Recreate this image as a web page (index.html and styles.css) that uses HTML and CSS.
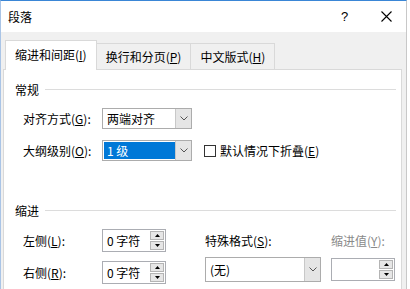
FILE: index.html
```html
<!DOCTYPE html>
<html lang="zh">
<head>
  <meta charset="UTF-8" />
  <title>段落</title>
  <link rel="stylesheet" href="styles.css">
</head>
<body>
  <div class="window">
    <div class="titlebar">
      <span class="title">段落</span>
      <span class="help">?</span>
      <span class="close">
        <svg width="11" height="11" viewBox="0 0 11 11"><path d="M0.5 0.5 L10.5 10.5 M10.5 0.5 L0.5 10.5" stroke="#000" stroke-width="1.1" fill="none"/></svg>
      </span>
    </div>

    <div class="tabs">
      <div class="tab active">缩进和间距(<u>I</u>)</div>
      <div class="tab">换行和分页(<u>P</u>)</div>
      <div class="tab">中文版式(<u>H</u>)</div>
    </div>

    <div class="panel">
      <div class="group-title first"><span>常规</span><div class="line"></div></div>

      <div class="row">
        <label class="lbl">对齐方式(<u>G</u>):</label>
        <div class="select">
          <div class="value">两端对齐</div>
          <div class="arrow"><svg width="8" height="5" viewBox="0 0 8 5"><path d="M0.5 0.5 L4 4 L7.5 0.5" stroke="#555" fill="none"/></svg></div>
        </div>
      </div>

      <div class="row">
        <label class="lbl">大纲级别(<u>O</u>):</label>
        <div class="select">
          <div class="value selected">1 级</div>
          <div class="arrow"><svg width="8" height="5" viewBox="0 0 8 5"><path d="M0.5 0.5 L4 4 L7.5 0.5" stroke="#555" fill="none"/></svg></div>
        </div>
        <div class="check">
          <span class="box"></span>
          <span>默认情况下折叠(<u>E</u>)</span>
        </div>
      </div>

      <div class="group-title second"><span>缩进</span><div class="line"></div></div>

      <div class="indent">
        <div class="indent-left">
          <div class="row tall">
            <label class="lbl">左侧(<u>L</u>):</label>
            <div class="spin">
              <div class="value">0 字符</div>
              <div class="spin-btns">
                <div class="sb"><svg width="5" height="3" viewBox="0 0 5 3"><path d="M0 3 L2.5 0 L5 3 Z" fill="#000"/></svg></div>
                <div class="sb"><svg width="5" height="3" viewBox="0 0 5 3"><path d="M0 0 L2.5 3 L5 0 Z" fill="#000"/></svg></div>
              </div>
            </div>
          </div>
          <div class="row tall">
            <label class="lbl">右侧(<u>R</u>):</label>
            <div class="spin">
              <div class="value">0 字符</div>
              <div class="spin-btns">
                <div class="sb"><svg width="5" height="3" viewBox="0 0 5 3"><path d="M0 3 L2.5 0 L5 3 Z" fill="#000"/></svg></div>
                <div class="sb"><svg width="5" height="3" viewBox="0 0 5 3"><path d="M0 0 L2.5 3 L5 0 Z" fill="#000"/></svg></div>
              </div>
            </div>
          </div>
        </div>

        <div class="col special">
          <div class="col-label">特殊格式(<u>S</u>):</div>
          <div class="select wide">
            <div class="value">(无)</div>
            <div class="arrow"><svg width="8" height="5" viewBox="0 0 8 5"><path d="M0.5 0.5 L4 4 L7.5 0.5" stroke="#555" fill="none"/></svg></div>
          </div>
        </div>

        <div class="col amount">
          <div class="col-label disabled">缩进值(<u>Y</u>):</div>
          <div class="spin short">
            <div class="value"></div>
            <div class="spin-btns">
              <div class="sb"><svg width="5" height="3" viewBox="0 0 5 3"><path d="M0 3 L2.5 0 L5 3 Z" fill="#000"/></svg></div>
              <div class="sb"><svg width="5" height="3" viewBox="0 0 5 3"><path d="M0 0 L2.5 3 L5 0 Z" fill="#000"/></svg></div>
            </div>
          </div>
        </div>
      </div>
    </div>
  </div>
</body>
</html>
```

FILE: styles.css
```css
body {
  margin: 0;
  background-color: #fff;
  font-family: "Noto Sans CJK SC", "Noto Sans", sans-serif;
  font-size: 12px;
  color: #000;
}

u {
  text-decoration: underline;
  text-underline-offset: 1px;
}

.window {
  width: 405px;
  height: 288px;
  border-top: 1px solid #3a86d6;
  border-left: 1px solid #a9c4e6;
  border-right: 1px solid #c8c8c8;
  background-color: #f0f0f0;
  overflow: hidden;
}

.titlebar {
  height: 31px;
  background-color: #fff;
  display: flex;
  align-items: center;
  padding-left: 7px;
}

.title {
  flex: 1;
  font-size: 12px;
}

.help {
  width: 12px;
  font-family: "Liberation Sans", sans-serif;
  font-size: 13px;
  margin-right: 28px;
}

.close {
  display: flex;
  width: 11px;
  margin-right: 14px;
}

.tabs {
  height: 37px;
  display: flex;
  align-items: flex-end;
  padding-left: 4px;
}

.tab {
  height: 26px;
  box-sizing: border-box;
  border: 1px solid #d9d9d9;
  border-bottom: none;
  border-left: none;
  padding: 0 9px;
  display: flex;
  align-items: center;
  background-color: #f0f0f0;
}

.tab.active {
  height: 30px;
  border-left: 1px solid #d9d9d9;
  background-color: #fff;
  margin-bottom: -1px;
  position: relative;
  z-index: 1;
  padding: 0 9px 3px 9px;
}

.panel {
  margin-left: 2px;
  width: 399px;
  height: 240px;
  background-color: #fff;
  border: 1px solid #d9d9d9;
  padding: 11px 5px 0 11px;
  box-sizing: border-box;
}

.group-title {
  display: flex;
  align-items: center;
  gap: 6px;
  height: 16px;
}

.group-title .line {
  flex: 1;
  height: 1px;
  background-color: #dcdcdc;
}

.group-title.second {
  margin-top: 41px;
}

.row {
  display: flex;
  align-items: center;
  margin-top: 11px;
}

.lbl {
  width: 79px;
  padding-left: 8px;
  box-sizing: border-box;
  width: 87px;
}

.select {
  width: 90px;
  height: 21px;
  box-sizing: border-box;
  border: 1px solid #acacac;
  display: flex;
  padding: 1px 0 1px 1px;
}

.select .value {
  flex: 1;
  display: flex;
  align-items: center;
  padding-left: 3px;
}

.select .value.selected {
  background-color: #0078d7;
  color: #fff;
}

.arrow {
  width: 15px;
  margin-top: -1px;
  margin-bottom: -1px;
  border-left: 1px solid #c8c8c8;
  background-color: #e5e5e5;
  display: flex;
  align-items: center;
  justify-content: center;
}

.check {
  display: flex;
  align-items: center;
  margin-left: 12px;
  gap: 4px;
}

.check .box {
  width: 10px;
  height: 10px;
  border: 1px solid #333;
}

.indent {
  display: flex;
  margin-top: 11px;
}

.indent-left .row:first-child {
  margin-top: 0;
}

.indent-left .row {
  margin-top: 9px;
}

.spin {
  width: 64px;
  height: 23px;
  box-sizing: border-box;
  border: 1px solid #abadb3;
  display: flex;
  padding: 1px;
}

.spin .value {
  flex: 1;
  display: flex;
  align-items: center;
  padding-left: 3px;
}

.spin-btns {
  width: 14px;
  display: flex;
  flex-direction: column;
  gap: 1px;
}

.sb {
  flex: 1;
  background-color: #e6e6e6;
  border: 1px solid #b4b4b4;
  display: flex;
  align-items: center;
  justify-content: center;
}

.col {
  display: flex;
  flex-direction: column;
}

.col-label {
  height: 23px;
  display: flex;
  align-items: center;
  margin-bottom: 6px;
}

.col-label.disabled {
  color: #8a8a8a;
}

.special {
  margin-left: 39px;
}

.select.wide {
  width: 116px;
  height: 25px;
  margin-top: -1px;
}

.amount {
  margin-left: 10px;
}

.spin.short {
  width: 64px;
}
```
